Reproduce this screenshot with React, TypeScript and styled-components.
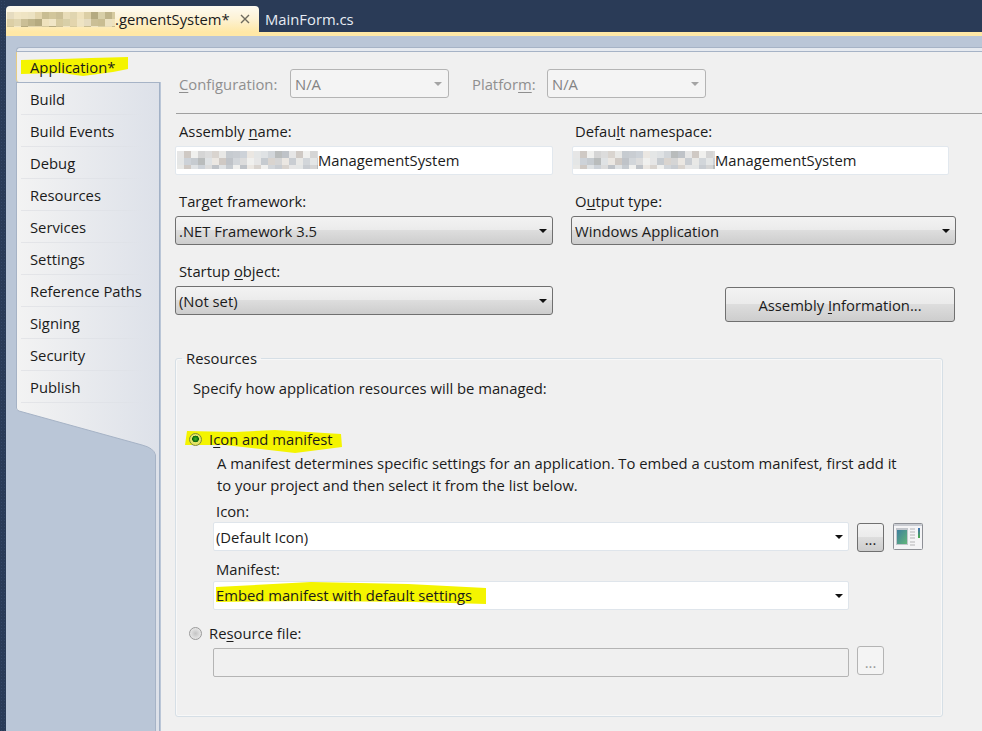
import React from "react";
import styled, { createGlobalStyle } from "styled-components";

const Global = createGlobalStyle`
  html, body { margin: 0; padding: 0; }
  body { font-family: "Open Sans", "Noto Sans", "Liberation Sans", sans-serif; font-size: 14.8px; color: #1b1b1b; }
  * { box-sizing: border-box; }
  u { text-underline-offset: 2px; text-decoration-thickness: 1px; }
`;

const Page = styled.div`
  width: 982px; height: 731px; display: flex; overflow: hidden; background: #2a3b57;
`;
const Strip = styled.div`
  width: 6px; flex: none;
  background-color: #2a3b57;
  background-image: radial-gradient(#354868 1px, transparent 1px);
  background-size: 3px 3px;
`;
const Workspace = styled.div`
  flex: 1; display: flex; flex-direction: column; min-width: 0;
`;
const TabStrip = styled.div`
  height: 32px; padding-top: 6px; display: flex; flex: none; background: #2a3b57;
`;
const ActiveTab = styled.div`
  width: 253px; flex: none; height: 26px; border-radius: 4px 4px 0 0; display: flex; align-items: center;
  padding-left: 1px; background: linear-gradient(#fdfaf1 0%, #fdf2d4 50%, #ffe8a6 100%);
  color: #1b1b1b; white-space: nowrap;
`;
const TabText = styled.span`
  width: 123px; flex: none;
`;
const Close = styled.span`
  margin-left: 2px; display: flex; color: #6e6a5e;
`;
const InactiveTab = styled.div`
  padding-left: 6px; height: 26px; display: flex; align-items: center; color: #e6ecf4;
`;
const Accent = styled.div`
  height: 4px; flex: none; background: #ffe8a6;
`;
const Body = styled.div`
  flex: 1; min-height: 0; background: #bac6d7; padding: 11px 0 0 10px; display: flex; flex-direction: column;
`;
const TopEdge = styled.div`
  height: 5px; flex: none; background: #e6eaf0; border-top: 1px solid #a6b3c6; border-left: 1px solid #a6b3c6;
  border-bottom: 1px solid #a6b3c6; border-radius: 4px 0 0 0;
`;
const Main = styled.div`
  flex: 1; min-height: 0; display: flex;
`;
const Nav = styled.nav`
  width: 145px; flex: none; display: flex; flex-direction: column; border-right: 1px solid transparent;
`;
const ActiveItem = styled.div`
  height: 30px; flex: none; background: #f0f0f0; padding-left: 13px; line-height: 30px;
  border-left: 1px solid #e6cc84; border-radius: 0 0 0 3px; margin-right: -1px;
`;
const NavBody = styled.div`
  flex: 1; min-height: 0; display: flex; flex-direction: column;
  background: linear-gradient(90deg, #f3f3f3 0%, #dde1e9 100%);
  border-top: 1px solid #a6b3c6; border-right: 1px solid #a2b1c6;
`;
const NavItem = styled.div`
  height: 32px; flex: none; padding-left: 13px; line-height: 33px; border-left: 1px solid #a6b3c6; position: relative;
  &::after {
    content: ""; position: absolute; left: 4px; right: 14px; bottom: 0; height: 1px;
    background: linear-gradient(90deg, #e4e5e8, #dfe2e8 85%, transparent);
  }
`;
const Tail = styled.div`
  flex: 1; min-height: 0; width: 140px; display: flex; flex-direction: column;
`;
const TailFill = styled.div`
  flex: 1; background: #bac6d7; border-right: 1px solid #a6b3c6;
`;
const TailSvg = styled.svg`
  display: block; flex: none;
`;
const Panel = styled.main`
  flex: 1; min-width: 0; background: #f0f0f0; padding-top: 17px; position: relative;
`;
const ConfigRow = styled.div`
  display: flex; align-items: center; padding-left: 14px; height: 29px;
`;
const ConfigLabel = styled.span<{ $w: number; $ml?: number }>`
  width: ${(p) => p.$w}px; margin-left: ${(p) => p.$ml ?? 0}px; padding-left: 4px; color: #8f8f8f; flex: none;
`;
const Divider = styled.div`
  height: 1px; margin-top: 15px; margin-left: 15px; background: #a0a0a0;
`;
const FormRow = styled.div<{ $mt: number }>`
  display: flex; margin-top: ${(p) => p.$mt}px; padding-left: 14px;
`;
const Field = styled.div<{ $w: number; $ml?: number }>`
  width: ${(p) => p.$w}px; margin-left: ${(p) => p.$ml ?? 0}px; flex: none;
`;
const Label = styled.div<{ $pl?: number }>`
  height: 24px; line-height: 18px; padding-left: ${(p) => p.$pl ?? 4}px;
`;
const TextBox = styled.div<{ $pl: number }>`
  height: 29px; background: #fff; border: 1px solid #e2e8ee; border-radius: 2px; display: flex; align-items: center;
  padding: 0 0 2px ${(p) => p.$pl}px;
`;
const Mosaic = styled.svg`
  display: block; flex: none;
`;
const Combo = styled.div<{ $variant: "raised" | "plain" | "disabled" }>`
  height: 29px; border-radius: 3px; display: flex; align-items: center; justify-content: space-between;
  padding: 0 ${(p) => (p.$variant === "disabled" ? 6 : 5)}px 0 ${(p) => (p.$variant === "disabled" ? 4 : 3)}px;
  ${(p) =>
    p.$variant === "raised"
      ? `border: 1px solid #707070; background: linear-gradient(#f3f3f3 0%, #ebebeb 48%, #dddddd 50%, #cdcdcd 100%);`
      : p.$variant === "plain"
        ? `border: 1px solid #dfe5eb; background: #fff; border-radius: 2px; padding-left: 2px;`
        : `border: 1px solid #b4b4b4; background: #f4f4f4; color: #838383;`}
`;
const Arrow = styled.span<{ $off?: boolean }>`
  width: 0; height: 0; flex: none; margin-top: 1px; border-left: 4px solid transparent; border-right: 4px solid transparent;
  border-top: 4px solid ${(p) => (p.$off ? "#a4a4a4" : "#111")};
`;
const InfoButton = styled.button`
  font: inherit; color: inherit; width: 230px; height: 35px; margin: 25px 0 0 172px; flex: none; border-radius: 3px;
  border: 1px solid #707070; padding: 0; background: linear-gradient(#f3f3f3 0%, #ebebeb 48%, #dddddd 50%, #cdcdcd 100%);
`;
const Resources = styled.fieldset`
  margin: 26px 0 0 14px; width: 768px; height: 369px; padding: 0; border: 1px solid #d6dfe6; border-radius: 3px;
  box-shadow: inset 0 0 0 1px #f8f8f8;
`;
const Legend = styled.legend`
  margin-left: 6px; padding: 0 4px; line-height: 20px;
`;
const Intro = styled.div`
  margin-top: 10px; padding-left: 17px; line-height: 20px;
`;
const RadioRow = styled.div<{ $mt: number }>`
  display: flex; align-items: center; height: 20px; padding-left: 13px; margin-top: ${(p) => p.$mt}px;
`;
const Radio = styled.span<{ $on?: boolean }>`
  position: relative; z-index: 1;
  width: 13px; height: 13px; flex: none; margin-right: 7px; border-radius: 50%; border: 1px solid ${(p) => (p.$on ? "#808a3a" : "#9a9a9a")};
  background: ${(p) =>
    p.$on
      ? "radial-gradient(circle at 50% 45%, #4ab52a 0%, #157d10 28%, #0d5a0c 38%, #e7e86a 44%, #d8d94e 100%)"
      : "radial-gradient(circle, #c4c4c4 0%, #dcdcdc 50%, #f4f4f4 100%)"};
`;
const Marker = styled.span<{ $lift?: number }>`
  position: relative; display: inline-block; margin-bottom: ${(p) => p.$lift ?? 0}px;
`;
const MarkerText = styled.span`
  position: relative; white-space: nowrap;
`;
const Ink = styled.svg<{ $x: number; $y: number }>`
  position: absolute; left: ${(p) => p.$x}px; top: ${(p) => p.$y}px; display: block; overflow: visible;
`;
const Description = styled.div`
  margin-top: 3px; padding-left: 41px; line-height: 22px; white-space: nowrap;
`;
const Group = styled.div<{ $mt: number }>`
  margin-top: ${(p) => p.$mt}px; padding-left: 37px;
`;
const GroupLabel = styled.div<{ $h: number }>`
  line-height: 20px; height: ${(p) => p.$h}px; padding-left: 3px;
`;
const ControlRow = styled.div`
  display: flex;
`;
const ComboSlot = styled.div`
  width: 636px; flex: none;
`;
const SmallButton = styled.div<{ $off?: boolean; $up?: boolean }>`
  width: 27px; height: 29px; flex: none; margin: ${(p) => (p.$up ? -2 : 1)}px 0 0 8px; border-radius: 3px; text-align: center; line-height: 30px;
  ${(p) =>
    p.$off
      ? `border: 1px solid #b4b4b4; background: #f4f4f4; color: #9a9a9a;`
      : `border: 1px solid #707070; background: linear-gradient(#f3f3f3 0%, #ebebeb 48%, #dddddd 50%, #cdcdcd 100%);`}
`;
const IconPreview = styled.svg`
  display: block; flex: none; margin: 1px 0 0 9px;
`;
const Disabled = styled.div`
  height: 29px; border: 1px solid #b4b4b4; border-radius: 2px; background: #f0f0f0;
`;

const tabTones = ["#e6dcc0", "#d8cfa8", "#efe2bd", "#cbbf96", "#e3d5ad", "#f1e6c6", "#bfb48a", "#dccfa6", "#e8dcb8", "#c9bd92", "#efe4c3", "#d6ca9f", "#b5aa80", "#e0d5b0", "#d2c69b", "#ece2c2"];
const boxTones = ["#e6e6e6", "#d2d6da", "#ebe7e2", "#c6cbd0", "#dcdcdc", "#cfc9c4", "#b9bcbc", "#e4e6e6", "#c9cdd2", "#d9d4cf", "#f0f0ee", "#bfc3c8", "#dfe2e4", "#cdd2d8", "#e8e8e6", "#d5d5d5"];

function Pixels({ w, h, tones, cell }: { w: number; h: number; tones: string[]; cell: number }) {
  const rects: React.ReactNode[] = [];
  for (let r = 0; r * cell < h; r++) {
    for (let c = 0; c * cell < w; c++) {
      rects.push(
        <rect key={`${r}-${c}`} x={c * cell} y={r * cell} width={cell} height={cell} fill={tones[(c * 5 + r * 7 + (c % 3) * r) % tones.length]} />
      );
    }
  }
  return (
    <Mosaic width={w} height={h} viewBox={`0 0 ${w} ${h}`} shapeRendering="crispEdges">
      {rects}
    </Mosaic>
  );
}

function Highlight({ x, y, w, h, lift, points, children }: { x: number; y: number; w: number; h: number; lift?: number; points: string; children: React.ReactNode }) {
  return (
    <Marker $lift={lift}>
      <Ink $x={x} $y={y} width={w} height={h} viewBox={`0 0 ${w} ${h}`}>
        <polygon points={points} fill="#f4f400" />
      </Ink>
      <MarkerText>{children}</MarkerText>
    </Marker>
  );
}

const navItems = ["Build", "Build Events", "Debug", "Resources", "Services", "Settings", "Reference Paths", "Signing", "Security", "Publish"];

export default function App() {
  return (
    <Page>
      <Global />
      <Strip />
      <Workspace>
        <TabStrip>
          <ActiveTab>
            <Pixels w={108} h={15} tones={tabTones} cell={7} />
            <TabText>.gementSystem*</TabText>
            <Close>
              <svg width="10" height="10" viewBox="0 0 10 10">
                <path d="M1 1l8 8M9 1l-8 8" stroke="currentColor" strokeWidth="1.4" fill="none" />
              </svg>
            </Close>
          </ActiveTab>
          <InactiveTab>MainForm.cs</InactiveTab>
        </TabStrip>
        <Accent />
        <Body>
          <TopEdge />
          <Main>
            <Nav>
              <ActiveItem>
                <Highlight x={-9} y={5} w={107} h={20} points="0,3 40,2 70,1 107,0 107,12 92,15 62,19 40,16 0,17">
                  Application*
                </Highlight>
              </ActiveItem>
              <NavBody>
                {navItems.map((n) => (
                  <NavItem key={n}>{n}</NavItem>
                ))}
                <Tail>
                  <TailSvg width="140" height="52" viewBox="0 0 140 52">
                    <path d="M0 5Q0 7 3 8L126 42Q138 45 139 52H0Z" fill="#bac6d7" />
                    <path d="M.5 0V5Q.5 7 3 8L126 42Q138 45 139.5 52" fill="none" stroke="#a6b3c6" />
                  </TailSvg>
                  <TailFill />
                </Tail>
              </NavBody>
            </Nav>
            <Panel>
              <ConfigRow>
                <ConfigLabel $w={115}>
                  <u>C</u>onfiguration:
                </ConfigLabel>
                <Field $w={159}>
                  <Combo $variant="disabled">
                    N/A
                    <Arrow $off />
                  </Combo>
                </Field>
                <ConfigLabel $w={79} $ml={19}>
                  Platfor<u>m</u>:
                </ConfigLabel>
                <Field $w={159}>
                  <Combo $variant="disabled">
                    N/A
                    <Arrow $off />
                  </Combo>
                </Field>
              </ConfigRow>
              <Divider />
              <FormRow $mt={8}>
                <Field $w={378}>
                  <Label>
                    Assembly <u>n</u>ame:
                  </Label>
                  <TextBox $pl={1}>
                    <Pixels w={141} h={18} tones={boxTones} cell={7} />
                    ManagementSystem
                  </TextBox>
                </Field>
                <Field $w={377} $ml={19}>
                  <Label $pl={3}>
                    Defau<u>l</u>t namespace:
                  </Label>
                  <TextBox $pl={0}>
                    <Pixels w={142} h={18} tones={boxTones} cell={7} />
                    ManagementSystem
                  </TextBox>
                </Field>
              </FormRow>
              <FormRow $mt={17}>
                <Field $w={378}>
                  <Label>
                    Tar<u>g</u>et framework:
                  </Label>
                  <Combo $variant="raised">
                    .NET Framework 3.5
                    <Arrow />
                  </Combo>
                </Field>
                <Field $w={385} $ml={18}>
                  <Label>
                    O<u>u</u>tput type:
                  </Label>
                  <Combo $variant="raised">
                    Windows Application
                    <Arrow />
                  </Combo>
                </Field>
              </FormRow>
              <FormRow $mt={17}>
                <Field $w={378}>
                  <Label>
                    Startup <u>o</u>bject:
                  </Label>
                  <Combo $variant="raised">
                    (Not set)
                    <Arrow />
                  </Combo>
                </Field>
                <InfoButton>
                  Assembly <u>I</u>nformation...
                </InfoButton>
              </FormRow>
              <Resources>
                <Legend>Resources</Legend>
                <Intro>Specify how application resources will be managed:</Intro>
                <RadioRow $mt={31}>
                  <Radio $on />
                  <Highlight x={-24} y={2} w={157} h={22} points="2,0 50,1 90,-1 156,3 157,16 110,22 40,14 0,14">
                    I<u>c</u>on and manifest
                  </Highlight>
                </RadioRow>
                <Description>
                  A manifest determines specific settings for an application. To embed a custom manifest, first add it
                  <br />
                  to your project and then select it from the list below.
                </Description>
                <Group $mt={5}>
                  <GroupLabel $h={21}>Icon:</GroupLabel>
                  <ControlRow>
                    <ComboSlot>
                      <Combo $variant="plain">
                        (Default Icon)
                        <Arrow />
                      </Combo>
                    </ComboSlot>
                    <SmallButton>...</SmallButton>
                    <IconPreview width="30" height="27" viewBox="0 0 30 27">
                      <rect x=".5" y=".5" width="29" height="26" rx="1" fill="#f4f4f6" stroke="#8e9096" />
                      <rect x="1" y="1" width="28" height="2" fill="#c9ccd2" />
                      <rect x="3" y="5" width="12" height="17" fill="#c2c6cc" />
                      <defs>
                        <linearGradient id="preview" x1="0" y1="0" x2="1" y2="1">
                          <stop offset="0" stopColor="#3f7f9e" />
                          <stop offset="1" stopColor="#62b67a" />
                        </linearGradient>
                        <linearGradient id="meter" x1="0" y1="0" x2="0" y2="1">
                          <stop offset="0" stopColor="#3f6fb5" />
                          <stop offset="1" stopColor="#4cae4c" />
                        </linearGradient>
                      </defs>
                      <rect x="4" y="7" width="10" height="14" fill="url(#preview)" />
                      <path d="M17 6h5M17 9h5M17 12h5M17 15h5M17 19h5M17 22h5" stroke="#c9c9cc" strokeWidth="1.4" />
                      <rect x="25" y="5" width="2" height="10" fill="url(#meter)" />
                    </IconPreview>
                  </ControlRow>
                </Group>
                <Group $mt={7}>
                  <GroupLabel $h={22}>Manifest:</GroupLabel>
                  <ComboSlot>
                    <Combo $variant="plain">
                      <Highlight x={0} y={-3} w={270} h={23} lift={2} points="0,5 95,0 192,2 270,6 270,22 198,20 95,19 0,20">
                        Embed manifest with default settings
                      </Highlight>
                      <Arrow />
                    </Combo>
                  </ComboSlot>
                </Group>
                <RadioRow $mt={13}>
                  <Radio />
                  <span>
                    Re<u>s</u>ource file:
                  </span>
                </RadioRow>
                <Group $mt={5}>
                  <ControlRow>
                    <ComboSlot>
                      <Disabled />
                    </ComboSlot>
                    <SmallButton $off $up>
                      ...
                    </SmallButton>
                  </ControlRow>
                </Group>
              </Resources>
            </Panel>
          </Main>
        </Body>
      </Workspace>
    </Page>
  );
}
